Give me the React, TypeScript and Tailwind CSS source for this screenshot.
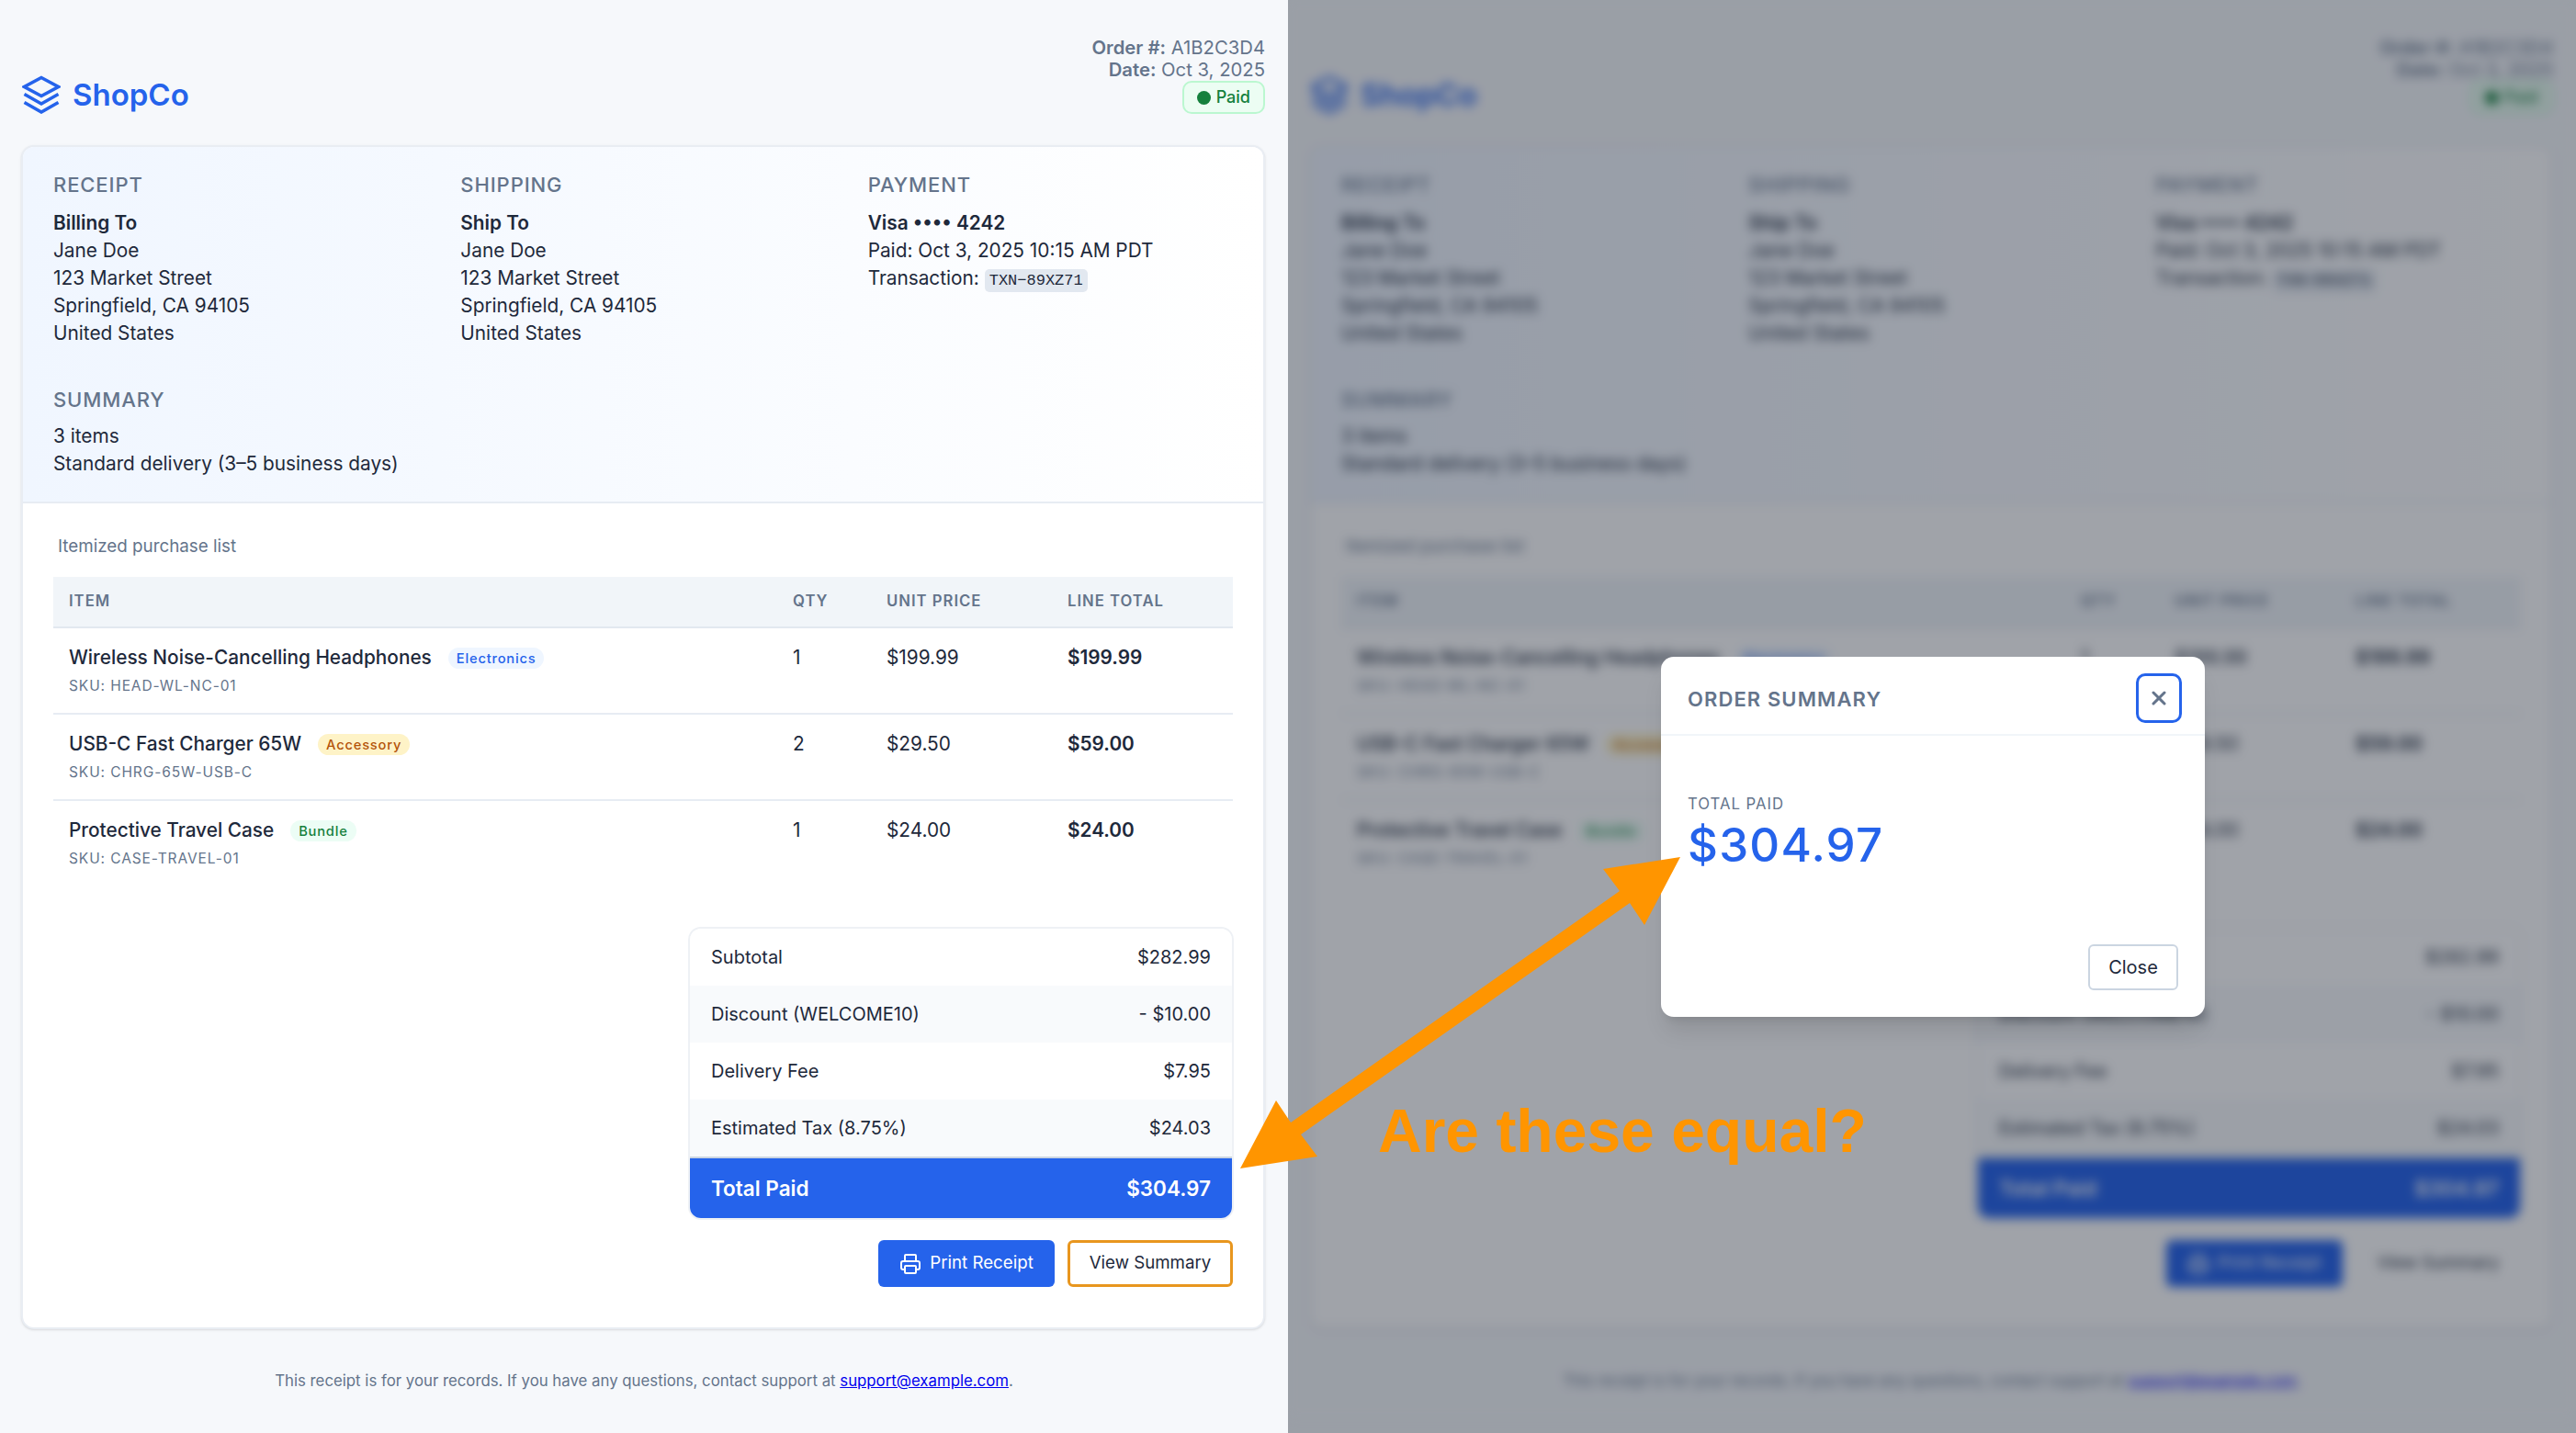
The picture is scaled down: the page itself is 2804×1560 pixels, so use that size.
import { Printer, X } from "lucide-react";

const items = [
  {
    name: "Wireless Noise-Cancelling Headphones",
    tag: "Electronics",
    tagClass: "bg-[#eff6ff] text-[#2563eb]",
    sku: "SKU: HEAD-WL-NC-01",
    qty: 1,
    price: "$199.99",
    total: "$199.99",
  },
  {
    name: "USB-C Fast Charger 65W",
    tag: "Accessory",
    tagClass: "bg-[#fef3c7] text-[#b45309]",
    sku: "SKU: CHRG-65W-USB-C",
    qty: 2,
    price: "$29.50",
    total: "$59.00",
  },
  {
    name: "Protective Travel Case",
    tag: "Bundle",
    tagClass: "bg-[#ecfdf5] text-[#15803d]",
    sku: "SKU: CASE-TRAVEL-01",
    qty: 1,
    price: "$24.00",
    total: "$24.00",
  },
];

const totals = [
  ["Subtotal", "$282.99"],
  ["Discount (WELCOME10)", "- $10.00"],
  ["Delivery Fee", "$7.95"],
  ["Estimated Tax (8.75%)", "$24.03"],
];

const Logo = () => (
  <svg width="42" height="42" viewBox="0 0 42 42" fill="none" stroke="#2563eb" strokeWidth="3.6">
    <path d="M21 2.5 39.5 12.5 21 22.5 2.5 12.5Z" />
    <path d="M2.5 20.5 21 31 39.5 20.5" />
    <path d="M2.5 29.5 21 40 39.5 29.5" />
  </svg>
);

const SectionLabel = ({ children, className }: { children: string; className: string }) => (
  <div className={`text-[22px] leading-[30px] font-medium tracking-[0.9px] text-[#64748b] ${className}`}>{children}</div>
);

const Address = ({ label, title }: { label: string; title: string }) => (
  <div>
    <SectionLabel className="mb-[12px]">{label}</SectionLabel>
    <div className="font-semibold text-[#1e293b]">{title}</div>
    <div>Jane Doe</div>
    <div>123 Market Street</div>
    <div>Springfield, CA 94105</div>
    <div>United States</div>
  </div>
);

const Receipt = ({ focused }: { focused?: boolean }) => (
  <div className="w-[1402px] font-['Inter',sans-serif] text-[#1e293b] bg-[#f6f8fb]">
    <header className="flex justify-between items-end pt-[40px] pl-[24px] pr-[25px] mb-[34px]">
      <div className="flex items-center gap-[13px] h-[42px]">
        <Logo />
        <span className="text-[33px] leading-[42px] font-semibold text-[#2563eb]">ShopCo</span>
      </div>
      <div className="flex flex-col items-end text-[20.3px] leading-[24px] text-[#64748b]">
        <div>
          <span className="font-semibold">Order #:</span> A1B2C3D4
        </div>
        <div>
          <span className="font-semibold">Date:</span> Oct 3, 2025
        </div>
        <div className="flex items-center gap-[6px] h-[36px] px-[14px] rounded-[10px] border-2 border-[#bbf7d0] bg-[#ecfdf3] text-[18px] font-medium text-[#15803d]">
          <span className="w-[15px] h-[15px] rounded-full bg-[#15803d]" />
          Paid
        </div>
      </div>
    </header>

    <main className="mx-[23px] w-[1354px] rounded-[14px] border-2 border-[#e9edf3] bg-white shadow-sm overflow-hidden">
      <section className="bg-gradient-to-r from-[#f0f6ff] to-white border-b-2 border-[#e7ecf3] px-[33px] pt-[26px] pb-[26px] text-[20.8px] leading-[30px]">
        <div className="grid grid-cols-3 gap-x-[46px]">
          <Address label="RECEIPT" title="Billing To" />
          <Address label="SHIPPING" title="Ship To" />
          <div>
            <SectionLabel className="mb-[12px]">PAYMENT</SectionLabel>
            <div className="font-semibold">Visa •••• 4242</div>
            <div>Paid: Oct 3, 2025 10:15 AM PDT</div>
            <div>
              Transaction:{" "}
              <code className="inline-block px-[5px] rounded-[5px] bg-[#e2e8f0] text-[17px] leading-[25px] font-['Liberation_Mono',monospace]">
                TXN−89XZ71
              </code>
            </div>
          </div>
        </div>
        <div className="mt-[42px]">
          <SectionLabel className="mb-[10px]">SUMMARY</SectionLabel>
          <div>3 items</div>
          <div>Standard delivery (3–5 business days)</div>
        </div>
      </section>

      <section className="px-[33px] pt-[33px] pb-[44px]">
        <div className="pl-[5px] mb-[19px] text-[18.8px] leading-[28px] text-[#64748b]">Itemized purchase list</div>
        <table className="w-full table-fixed border-collapse">
          <colgroup>
            <col className="w-[788px]" />
            <col className="w-[102px]" />
            <col className="w-[197px]" />
            <col />
          </colgroup>
          <thead>
            <tr className="h-[55px] bg-[#f1f5f9] border-b-2 border-[#e2e8f0] text-left text-[16.7px] tracking-[1px] text-[#64748b]">
              <th className="pl-[17px] font-semibold">ITEM</th>
              <th className="pl-[17px] font-semibold">QTY</th>
              <th className="pl-[17px] font-semibold">UNIT PRICE</th>
              <th className="pl-[17px] font-semibold">LINE TOTAL</th>
            </tr>
          </thead>
          <tbody className="text-[20.8px]">
            {items.map((item, i) => (
              <tr key={item.sku} className={i < 2 ? "h-[94px] border-b-2 border-[#e7ecf3] align-top" : "h-[92px] align-top"}>
                <td className="pl-[17px] pt-[16px]">
                  <div className="flex items-center gap-[18px] h-[32px]">
                    <span className="font-medium">{item.name}</span>
                    <span className={`px-[9px] h-[23px] leading-[24px] rounded-full text-[14.7px] font-medium tracking-[0.8px] ${item.tagClass}`}>
                      {item.tag}
                    </span>
                  </div>
                  <div className="mt-[3px] text-[15.5px] leading-[24px] tracking-[0.9px] text-[#64748b]">{item.sku}</div>
                </td>
                <td className="pl-[17px] pt-[16px] leading-[32px]">{item.qty}</td>
                <td className="pl-[17px] pt-[16px] leading-[32px]">{item.price}</td>
                <td className="pl-[17px] pt-[16px] leading-[32px] font-semibold">{item.total}</td>
              </tr>
            ))}
          </tbody>
        </table>

        <div className="ml-auto mr-[1px] mt-[48px] w-[590px] rounded-[12px] shadow-[0_0_0_2px_#eef1f5] overflow-hidden text-[20px]">
          {totals.map(([label, value], i) => (
            <div key={label} className={`flex justify-between items-center h-[62px] px-[23px] ${i % 2 ? "bg-[#f8fafc]" : "bg-white"}`}>
              <span>{label}</span>
              <span>{value}</span>
            </div>
          ))}
          <div className="flex justify-between items-center h-[67px] px-[23px] bg-[#2563eb] border-t-2 border-[#cbd5e1] text-[22.5px] font-semibold text-white">
            <span>Total Paid</span>
            <span>$304.97</span>
          </div>
        </div>

        <div className="flex justify-end gap-[14px] mt-[24px] text-[18.7px]">
          <button className="flex items-center justify-center gap-[9px] w-[192px] h-[51px] rounded-[6px] bg-[#2563eb] text-white">
            <Printer size={24} strokeWidth={2} />
            Print Receipt
          </button>
          <button
            className={`w-[180px] h-[51px] rounded-[6px] border-[3px] bg-white ${focused ? "border-[#e8961e]" : "border-transparent"}`}
          >
            View Summary
          </button>
        </div>
      </section>
    </main>

    <footer className="h-[97px] pt-[43px] text-center text-[16.8px] leading-[26px] text-[#64748b]">
      This receipt is for your records. If you have any questions, contact support at{" "}
      <a className="text-[#0000ee] underline">support@example.com</a>.
    </footer>
  </div>
);

const Annotation = () => (
  <svg className="absolute inset-0 pointer-events-none" width="2804" height="1560" viewBox="0 0 2804 1560">
    <polygon
      points="1829,933 1790,1007 1774,983 1416,1235 1434,1259 1350,1272 1389,1198 1405,1222 1763,970 1745,946"
      fill="#ff9500"
    />
  </svg>
);

export default function App() {
  return (
    <div className="relative flex w-[2804px] h-[1560px] overflow-hidden bg-white">
      <Receipt focused />

      {/* blurred copy behind the dialog */}
      <div className="relative w-[1402px] h-[1560px] overflow-hidden bg-[#f6f8fb]">
        <div className="blur-[6px]" aria-hidden>
          <Receipt />
        </div>
        <div className="absolute inset-0 bg-[#111827]/40" />
      </div>

      <div className="absolute left-[1808px] top-[715px] w-[592px] h-[392px] flex flex-col rounded-[14px] bg-white shadow-xl font-['Inter',sans-serif] text-[#1e293b]">
        <div className="flex justify-between items-center h-[86px] pt-[6px] pl-[29px] pr-[25px] border-b-2 border-[#f1f5f9]">
          <h2 className="mt-[2px] text-[22px] font-semibold tracking-[1.1px] text-[#64748b]">ORDER SUMMARY</h2>
          <button className="flex items-center justify-center w-[50px] h-[54px] rounded-[10px] border-[3px] border-[#2563eb] text-[#64748b]">
            <X size={24} strokeWidth={3} />
          </button>
        </div>
        <div className="flex-1 pt-[61px] pl-[29px]">
          <div className="text-[16.7px] leading-[26px] tracking-[1px] text-[#64748b]">TOTAL PAID</div>
          <div className="text-[51px] leading-[64px] font-medium tracking-[1.2px] text-[#2563eb]">$304.97</div>
        </div>
        <div className="flex justify-end pr-[29px] pb-[29px]">
          <button className="w-[98px] h-[50px] rounded-[6px] border-2 border-[#cbd5e1] bg-white text-[20px]">Close</button>
        </div>
      </div>

      <Annotation />
      <div className="absolute left-[1500px] top-[1191px] text-[66px] leading-[80px] font-bold text-[#ff9500] font-['Liberation_Sans',Arial,sans-serif]">
        Are these equal?
      </div>
    </div>
  );
}
